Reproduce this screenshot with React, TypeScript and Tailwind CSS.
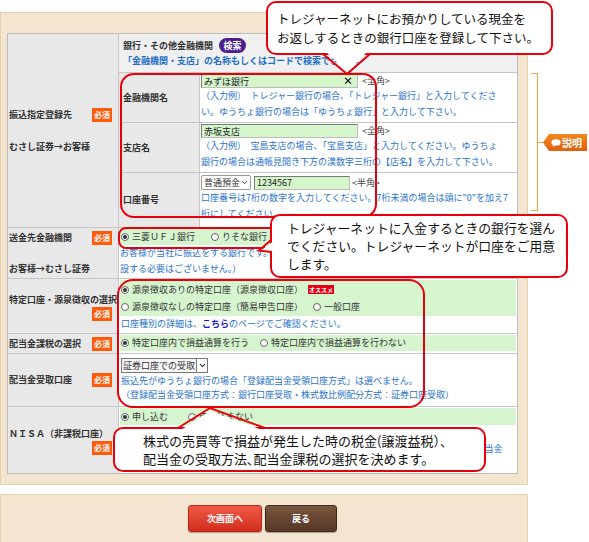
import React from 'react'
import { ChevronDown } from 'lucide-react'

const Required = () => (
  <span className="inline-flex h-[14px] w-[20px] shrink-0 items-center justify-center bg-[#ff5a0a] text-[8px] font-bold leading-none text-white">
    必須
  </span>
)

const Radio = ({ checked, label, className = '' }: { checked?: boolean; label: string; className?: string }) => (
  <span className={`inline-flex items-center ${className}`}>
    <span className="mr-[3px] flex h-[8px] w-[8px] items-center justify-center rounded-full border border-[#666] bg-white">
      {checked && <span className="h-[4px] w-[4px] rounded-full bg-[#333]" />}
    </span>
    {label}
  </span>
)

const GreenInput = ({ value, width, clear }: { value: string; width: string; clear?: boolean }) => (
  <div
    className={`flex h-[14px] items-center justify-between border border-[#bcbcbc] border-l-[#7a7a7a] border-t-[#7a7a7a] bg-[#d5f5cb] pl-[2px] pr-[4px] leading-none text-[#222] ${width}`}
  >
    <span>{value}</span>
    {clear && <span className="text-[10px] font-bold text-black">×</span>}
  </div>
)

export default function App() {
  const blue = 'whitespace-nowrap leading-[16px] text-[#2a74c9]'

  return (
    <div className="relative h-[542px] w-[589px] overflow-hidden bg-white font-['Noto_Sans_CJK_JP','Noto_Sans',sans-serif] text-[#333]">
      {/* 入力フォーム */}
      <div className="mt-[12px] w-[528px] border border-[#e6d0ae] bg-[#f3e5d0] pb-[10px] pl-[6px] pt-[20px]">
        <div className="w-[511px] border border-[#bdbdbd] bg-white text-[9px]">
          {/* 振込指定登録先 */}
          <div className="flex h-[194px] border-b border-[#c6c6c6]">
            <div className="flex w-[111px] shrink-0 flex-col justify-center border-r border-[#c6c6c6] bg-[#e8e8e8] pl-[1px] pr-[6px] font-bold">
              <div className="flex h-[15px] items-center justify-between">
                <span>振込指定登録先</span>
                <Required />
              </div>
              <div className="mt-[16px] h-[15px] leading-[15px]">むさし証券→お客様</div>
            </div>
            <div className="flex flex-1 flex-col">
              <div className="h-[39px] border-b border-[#c6c6c6] bg-[#f0f0f0] pl-[4px] pt-[4px]">
                <div className="flex h-[15px] items-center font-bold">
                  銀行・その他金融機関
                  <span className="ml-[6px] inline-flex h-[15px] w-[27px] items-center justify-center rounded-full bg-[#4b1f8f] text-white">
                    検索
                  </span>
                </div>
                <div className="whitespace-nowrap font-bold leading-[15px] text-[#1f6fc6]">
                  「金融機関・支店」の名称もしくはコードで検索できます。
                </div>
              </div>

              <div className="flex h-[50px] border-b border-[#c6c6c6]">
                <div className="flex w-[81px] shrink-0 items-center border-r border-[#c6c6c6] bg-[#e8e8e8] pl-[4px] font-bold">
                  金融機関名
                </div>
                <div className="flex-1 pl-[1px] pt-[1px]">
                  <div className="flex items-center">
                    <GreenInput value="みずほ銀行" width="w-[157px]" clear />
                    <span className="ml-[4px] text-[#444]">{'<全角>'}</span>
                  </div>
                  <p className={blue}>
                    （入力例）　トレジャー銀行の場合、「トレジャー銀行」と入力してくださ
                    <br />
                    い。ゆうちょ銀行の場合は「ゆうちょ銀行」と入力して下さい。
                  </p>
                </div>
              </div>

              <div className="flex h-[50px] border-b border-[#c6c6c6]">
                <div className="flex w-[81px] shrink-0 items-center border-r border-[#c6c6c6] bg-[#e8e8e8] pl-[4px] font-bold">
                  支店名
                </div>
                <div className="flex-1 pl-[1px] pt-[1px]">
                  <div className="flex items-center">
                    <GreenInput value="赤坂支店" width="w-[157px]" />
                    <span className="ml-[4px] text-[#444]">{'<全角>'}</span>
                  </div>
                  <p className={blue}>
                    （入力例）　宝島支店の場合、「宝島支店」と入力してください。ゆうちょ
                    <br />
                    銀行の場合は通帳見開き下方の漢数字三桁の【店名】を入力して下さい。
                  </p>
                </div>
              </div>

              <div className="flex flex-1">
                <div className="flex w-[81px] shrink-0 items-center border-r border-[#c6c6c6] bg-[#e8e8e8] pl-[4px] font-bold">
                  口座番号
                </div>
                <div className="flex-1 pl-[1px] pt-[2px]">
                  <div className="flex items-center">
                    <div className="flex h-[15px] w-[50px] items-center justify-between rounded-[2px] border border-[#9a9a9a] bg-white pl-[2px] pr-[1px] leading-none">
                      普通預金
                      <ChevronDown size={9} strokeWidth={2.5} />
                    </div>
                    <div className="ml-[3px]">
                      <GreenInput value="1234567" width="w-[96px]" />
                    </div>
                    <span className="ml-[2px] text-[#444]">{'<半角>'}</span>
                  </div>
                  <p className={blue}>
                    口座番号は7桁の数字を入力してください。7桁未満の場合は頭に"0"を加え7
                    <br />
                    桁にしてください。
                  </p>
                </div>
              </div>
            </div>
          </div>

          {/* 送金先金融機関 */}
          <div className="flex h-[51px] border-b border-[#c6c6c6]">
            <div className="flex w-[111px] shrink-0 flex-col justify-center border-r border-[#c6c6c6] bg-[#e8e8e8] pl-[1px] pr-[6px] font-bold">
              <div className="flex h-[15px] items-center justify-between">
                <span>送金先金融機関</span>
                <Required />
              </div>
              <div className="mt-[16px] h-[15px] leading-[15px]">お客様→むさし証券</div>
            </div>
            <div className="flex-1 overflow-hidden pt-[1px]">
              <div className="mx-[1px] flex h-[16px] items-center bg-[#d6f5cf] pl-[1px]">
                <Radio checked label="三菱ＵＦＪ銀行" />
                <Radio label="りそな銀行" className="ml-[16px]" />
                <Radio label="みずほ銀行" className="ml-[16px]" />
              </div>
              <p className={`${blue} pl-[1px]`}>
                お客様が当社に振込をする銀行です。（お客様ご自身で新たに口座を開
                <br />
                設する必要はございません。）
              </p>
            </div>
          </div>

          {/* 特定口座・源泉徴収の選択 */}
          <div className="flex h-[55px] border-b border-[#c6c6c6]">
            <div className="flex w-[111px] shrink-0 flex-col justify-center overflow-hidden border-r border-[#c6c6c6] bg-[#e8e8e8] pl-[1px] pr-[6px] font-bold">
              <div className="h-[15px] whitespace-nowrap leading-[15px]">特定口座・源泉徴収の選択</div>
              <div className="flex justify-end">
                <Required />
              </div>
            </div>
            <div className="flex-1 pt-[1px]">
              <div className="mx-[1px] h-[36px] bg-[#d6f5cf] pl-[1px] pt-[1px] leading-[17px]">
                <div className="flex items-center">
                  <Radio checked label="源泉徴収ありの特定口座（源泉徴収口座）" />
                  <span className="ml-[5px] inline-flex h-[9px] items-center bg-[#e60012] px-[1px] text-[6px] font-bold leading-none text-white">
                    オススメ
                  </span>
                </div>
                <div className="flex items-center">
                  <Radio label="源泉徴収なしの特定口座（簡易申告口座）" />
                  <Radio label="一般口座" className="ml-[10px]" />
                </div>
              </div>
              <p className="pl-[2px] leading-[15px] text-[#2a74c9]">
                口座種別の詳細は、<span className="font-bold text-[#1616d0]">こちら</span>のページでご確認ください。
              </p>
            </div>
          </div>

          {/* 配当金課税の選択 */}
          <div className="flex h-[20px] border-b border-[#c6c6c6]">
            <div className="flex w-[111px] shrink-0 items-center justify-between border-r border-[#c6c6c6] bg-[#e8e8e8] pl-[1px] pr-[6px] font-bold">
              <span>配当金課税の選択</span>
              <Required />
            </div>
            <div className="flex-1 pt-[1px]">
              <div className="mx-[1px] flex h-[16px] items-center bg-[#d6f5cf] pl-[1px]">
                <Radio checked label="特定口座内で損益通算を行う" />
                <Radio label="特定口座内で損益通算を行わない" className="ml-[11px]" />
              </div>
            </div>
          </div>

          {/* 配当金受取口座 */}
          <div className="flex h-[53px] border-b border-[#c6c6c6]">
            <div className="flex w-[111px] shrink-0 items-center justify-between border-r border-[#c6c6c6] bg-[#e8e8e8] pl-[1px] pr-[6px] font-bold">
              <span>配当金受取口座</span>
              <Required />
            </div>
            <div className="flex-1 pl-[2px] pt-[4px]">
              <div className="flex h-[15px] w-[87px] items-center overflow-hidden border border-[#777] bg-[#f6f6f6] leading-none">
                <span className="flex-1 whitespace-nowrap pl-[1px]">証券口座での受取</span>
                <span className="flex h-full w-[11px] shrink-0 items-center justify-center border-l border-[#777] bg-white">
                  <ChevronDown size={9} strokeWidth={3} />
                </span>
              </div>
              <p className="mt-[1px] whitespace-nowrap leading-[14px] text-[#2a74c9]">
                振込先がゆうちょ銀行の場合「登録配当金受領口座方式」は選べません。
                <br />
                （登録配当金受領口座方式：銀行口座受取・株式数比例配分方式：証券口座受取）
              </p>
            </div>
          </div>

          {/* NISA */}
          <div className="flex h-[66px]">
            <div className="flex w-[111px] shrink-0 flex-col justify-center border-r border-[#c6c6c6] bg-[#e8e8e8] pl-[1px] pr-[6px] font-bold">
              <div className="h-[15px] whitespace-nowrap leading-[15px]">ＮＩＳＡ（非課税口座）</div>
              <div className="flex justify-end">
                <Required />
              </div>
            </div>
            <div className="flex-1 overflow-hidden pt-[1px]">
              <div className="mx-[1px] flex h-[17px] items-center bg-[#d6f5cf] pl-[1px]">
                <Radio checked label="申し込む" />
                <Radio label="申し込まない" className="ml-[20px]" />
              </div>
              <p className={`${blue} mt-[16px] pl-[1px]`}>
                ＮＩＳＡ口座をお申し込みの場合、「株式数比例配分方式」を選択しないと上場株式等の配当金
                <br />
                は非課税になりません。
              </p>
            </div>
          </div>
        </div>
      </div>

      {/* ボタン */}
      <div className="mt-[9px] flex h-[60px] w-[528px] justify-center gap-[3px] border border-[#e6d0ae] bg-[#f3e5d0] pr-[3px] pt-[10px]">
        <button className="flex h-[27px] w-[74px] items-center justify-center rounded-[3px] border border-[#b8261a] bg-gradient-to-b from-[#ee5a44] to-[#d22a1c] text-[9px] font-bold text-white shadow-[0_1px_1px_rgba(0,0,0,0.3)]">
          次画面へ
        </button>
        <button className="flex h-[27px] w-[72px] items-center justify-center rounded-[3px] border border-[#3f2a1c] bg-gradient-to-b from-[#7a5640] to-[#553826] text-[9px] font-bold text-white shadow-[0_1px_1px_rgba(0,0,0,0.3)]">
          戻る
        </button>
      </div>

      {/* 説明タブ */}
      <div className="absolute left-[531px] top-[73px] z-10 h-[138px] w-[7px] border-y border-r border-[#f2a33a]" />
      <div className="absolute left-[538px] top-[142px] z-10 h-px w-[6px] bg-[#f2a33a]" />
      <div className="absolute left-[543px] top-[134px] z-10 flex h-[17px] w-[44px] items-center bg-gradient-to-b from-[#f6861e] to-[#e0600c] pl-[8px] text-[10px] font-bold text-white [clip-path:polygon(6px_0,100%_0,100%_100%,6px_100%,0_50%)]">
        <svg width="10" height="8" viewBox="0 0 10 8" className="mr-[1px]">
          <ellipse cx="5" cy="3.4" rx="4.6" ry="3.2" fill="#fff" />
          <path d="M2.5 5.5 L1.5 7.8 L4.5 6.2 Z" fill="#fff" />
        </svg>
        説明
      </div>

      {/* 赤枠 */}
      <div className="absolute left-[120px] top-[73px] z-20 h-[145px] w-[257px] rounded-[14px] border-2 border-[#e8000b]" />
      <div className="absolute left-[118px] top-[227px] z-20 h-[22px] w-[180px] rounded-[8px] border-2 border-[#e8000b]" />
      <div className="absolute left-[117px] top-[279px] z-20 h-[129px] w-[308px] rounded-[16px] border-2 border-[#e8000b]" />

      {/* 吹き出し */}
      <div className="absolute left-[266px] top-[1px] z-30 flex h-[54px] w-[287px] items-center rounded-[10px] border-2 border-[#e8000b] bg-white pl-[9px] text-[12.5px] leading-[19px] text-[#111]">
        <p>
          トレジャーネットにお預かりしている現金を
          <br />
          お返しするときの銀行口座を登録して下さい。
        </p>
      </div>
      <div className="absolute left-[270px] top-[214px] z-30 flex h-[64px] w-[298px] items-center rounded-[10px] border-2 border-[#e8000b] bg-white pl-[15px] text-[12.8px] leading-[18px] text-[#111]">
        <p>
          トレジャーネットに入金するときの銀行を選ん
          <br />
          でください。トレジャーネットが口座をご用意
          <br />
          します。
        </p>
      </div>
      <div className="absolute left-[113px] top-[427px] z-30 flex h-[45px] w-[373px] items-center rounded-[10px] border-2 border-[#e8000b] bg-white pl-[28px] text-[13px] leading-[17.5px] text-[#111]">
        <p className="whitespace-nowrap">
          株式の売買等で損益が発生した時の税金(譲渡益税）、
          <br />
          配当金の受取方法､配当金課税の選択を決めます。
        </p>
      </div>
      <svg className="pointer-events-none absolute left-0 top-0 z-40" width="589" height="542">
        <polygon points="325,51 347,72 368,51" fill="#fff" />
        <polyline points="323,54 347,74 370,54" fill="none" stroke="#e8000b" strokeWidth="2" />
        <polygon points="273,241.5 261.5,250 273,251" fill="#fff" />
        <polyline points="271,240 259,250.5 271,252" fill="none" stroke="#e8000b" strokeWidth="2" />
        <polygon points="181,430 210,411 262,430" fill="#fff" />
        <polyline points="178,428 210,408 265,428" fill="none" stroke="#e8000b" strokeWidth="2" />
      </svg>
    </div>
  )
}
